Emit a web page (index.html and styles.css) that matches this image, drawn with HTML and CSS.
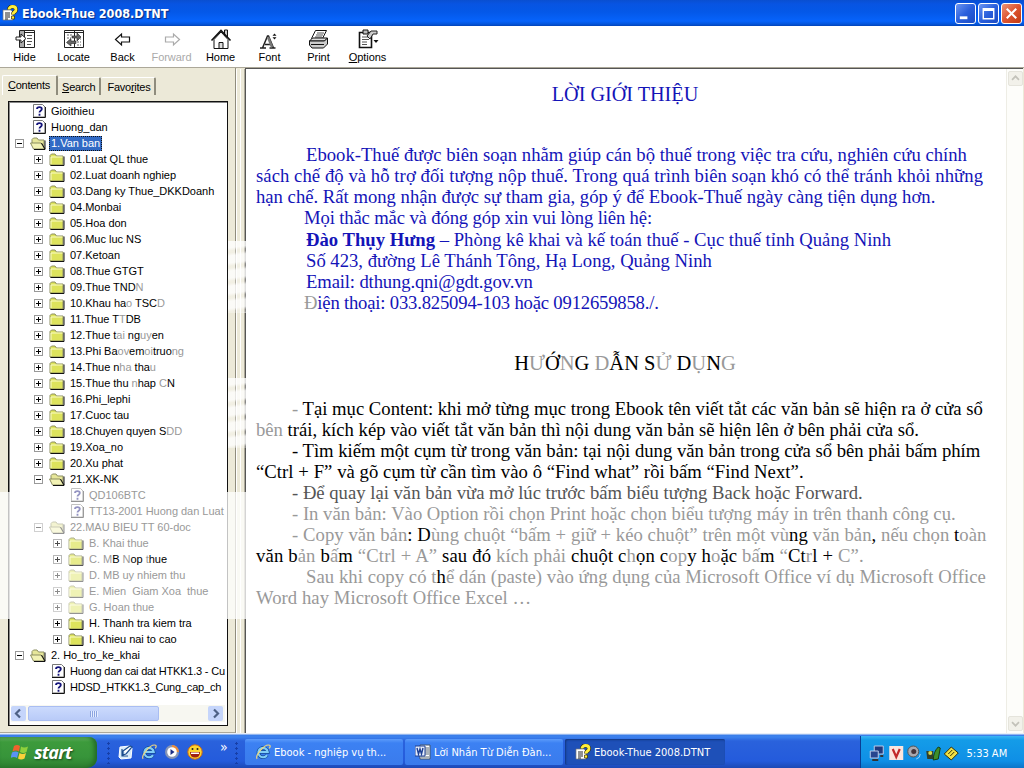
FILE: index.html
```
<!DOCTYPE html>
<html lang="vi">
<head>
    <meta charset="UTF-8">
    <meta name="viewport" content="width=device-width, initial-scale=1.0">
    <title>Ebook-Thue 2008.DTNT</title>
    <link rel="stylesheet" href="styles.css">
</head>
<body>
    <svg class="symbols">
        <symbol id="help" viewBox="0 0 16 16">
            <path d="M1 5h8l2 2v8H1z" fill="#fff" stroke="#777" stroke-width=".7"/>
            <path d="M3 8h5M3 10h5M3 12h5M3 14h3" stroke="#222" stroke-width="1"/>
            <path d="M7 4.500c0-4 7-4 7 0 0 3-3 2-3 5" fill="none" stroke="#332b00" stroke-width="4"/>
            <path d="M7 4.500c0-4 7-4 7 0 0 3-3 2-3 5" fill="none" stroke="#ffef3c" stroke-width="2.800"/>
            <path d="M9.500 11h3v3h-3z" fill="#ffef3c" stroke="#332b00" stroke-width=".7"/>
        </symbol>
        <symbol id="folder" viewBox="0 0 16 13">
            <path d="M1 12V2.500L2.500 1H6l1.500 2H14v9z" fill="#dde35c" stroke="#8d8f62"/>
            <path d="M2 4h11.500M2 4v7" stroke="#fbfcc8" fill="none"/>
            <path d="M15 3.500V12.500H1.500" fill="none" stroke="#111"/>
        </symbol>
        <symbol id="open" viewBox="0 0 16 13">
            <path d="M2 6V2.500L3.500 1H7l1.500 2H14v9z" fill="#e6e69a" stroke="#8d8f62"/>
            <path d="M.500 6h10.500l3.500 6H3.500z" fill="#f2f2b4" stroke="#8d8f62"/>
            <path d="M15 3.500V12.500H4M11.500 6l3.500 6" fill="none" stroke="#111"/>
        </symbol>
        <symbol id="leaf" viewBox="0 0 13 14">
            <path d="M.500.500H9.500L12 3V13H.500z" fill="#fff" stroke="#777"/>
            <path d="M12.400 3V13.500H0" fill="none" stroke="#111"/>
            <path d="M4 5c0-2.600 4.800-2.600 4.800 0 0 1.800-2.300 1.500-2.300 3.500M6.500 9.800v1.900" fill="none" stroke="#14147a" stroke-width="1.800"/>
        </symbol>
        <symbol id="ie" viewBox="0 0 18 18">
            <path d="M13.500 12.500a5.300 5.300 0 1 1 .8-3.500H5" fill="none" stroke="#134a96" stroke-width="4"/>
            <path d="M13.500 12.500a5.300 5.300 0 1 1 .8-3.500H5" fill="none" stroke="#7fcdf8" stroke-width="2.400"/>
            <path d="M2.500 16.500C-1 14 11-1 16.500 1.500c1 .5.500 2-.5 3.500" fill="none" stroke="#f3d87c" stroke-width="1.300"/>
        </symbol>
    </svg>

    <div class="titlebar">
        <svg class="app-icon"><use href="#help"/></svg>
        <h1>Ebook-Thue 2008.DTNT</h1>
        <div class="win-buttons">
            <span class="win-btn"><svg viewBox="0 0 20 20"><path d="M4 14.500h8" stroke="#fff" stroke-width="3"/></svg></span>
            <span class="win-btn"><svg viewBox="0 0 20 20"><path d="M4.500 5h11v10.500h-11zM4.500 6.500h11" fill="none" stroke="#fff" stroke-width="1.500"/></svg></span>
            <span class="win-btn close"><svg viewBox="0 0 20 20"><path d="M5 5l10 10M15 5L5 15" stroke="#fff" stroke-width="2.200"/></svg></span>
        </div>
    </div>

    <div class="toolbar">
        <div class="tool">
            <svg viewBox="0 0 20 20"><path d="M4.500 1.500h15v17h-15zM9.500 2v16M4 3.500h15" fill="#fff" stroke="#222"/><path d="M5 2h4v16H5z" fill="#aaa"/><path d="M12 6.500h5M12 9.500h5M12 12.500h5M12 15.500h4" stroke="#555"/><path d="M1 8h5V5l5 4.500L6 14v-3H1z" fill="#fff" stroke="#222"/></svg>
            <span>Hide</span>
        </div>
        <div class="tool">
            <svg viewBox="0 0 20 20"><path d="M.500 1.500h19v17H.500zM10.500 2v16M0 3.500h19" fill="#fff" stroke="#222"/><path d="M3 6h5M3 9h4M13 10h4M13 13h4M13 16h4" stroke="#666" stroke-dasharray="2 1"/><path d="M8 7h5V4l4 4-4 4V9H8zM12 12H7V9.500L2.500 13.500 7 17v-2.500h5z" fill="#666" stroke="#222" stroke-width=".6"/></svg>
            <span>Locate</span>
        </div>
        <div class="tool">
            <svg viewBox="0 0 20 20"><path d="M2.500 10.500l6-5.500v3h8v5h-8v3z" fill="#fff" stroke="#111" stroke-width="1.200"/></svg>
            <span>Back</span>
        </div>
        <div class="tool disabled">
            <svg viewBox="0 0 20 20"><path d="M17.500 10.500l-6-5.500v3h-8v5h8v3z" fill="#fff" stroke="#aaa" stroke-width="1.200"/></svg>
            <span>Forward</span>
        </div>
        <div class="tool">
            <svg viewBox="0 0 20 20"><path d="M13.500 1h3v7h-3z" fill="#ccc" stroke="#111"/><path d="M3 10.500v9h14v-9L10 3z" fill="#fff" stroke="#111"/><path d="M.500 11.500L10 1.500l9.500 10" fill="none" stroke="#111" stroke-width="1.600"/><path d="M8 13.500h4v6H8z" fill="#ddd" stroke="#111"/></svg>
            <span>Home</span>
        </div>
        <div class="tool">
            <svg viewBox="0 0 20 20"><path d="M2.500 19l5-12h1l5 12M5 15.500h7M0 19h6M9.500 19h6" fill="none" stroke="#222" stroke-width="1.500"/><path d="M8 8l4 10" stroke="#777" stroke-width="2.500"/><path d="M14.500 4.500l2 2.200h-4zM14.500 10.500l2-2.200h-4z" fill="#111"/></svg>
            <span>Font</span>
        </div>
        <div class="tool">
            <svg viewBox="0 0 20 20"><path d="M6.500 1.500h11l-4 8h-11z" fill="#fff" stroke="#111"/><path d="M8 4h7M7 6h7M6 8h7" stroke="#555"/><path d="M.500 12l3-3h15l-3 3z" fill="#ddd" stroke="#111"/><path d="M.500 12h15l3-3v6l-4 4H3l-2.500-3z" fill="#ccc" stroke="#111"/><path d="M2 15.500h13" stroke="#111"/></svg>
            <span>Print</span>
        </div>
        <div class="tool">
            <svg viewBox="0 0 20 20"><path d="M1.500 3.500h12v15h-12z" fill="#fff" stroke="#111" stroke-width="1.600"/><path d="M4 8h7M4 10.500h7M4 13h5M4 15.500h5" stroke="#555"/><path d="M5 1h5v4H5z" fill="#bbb" stroke="#111"/><path d="M9 7l4-5h6v3h-4l-3 5z" fill="#ccc" stroke="#222"/><path d="M15.500 11h5L18 14z" fill="#111"/></svg>
            <span><u>O</u>ptions</span>
        </div>
    </div>

    <div class="main">
        <div class="sidebar">
            <div class="tabs">
                <span class="tab active"><u>C</u>ontents</span>
                <span class="tab"><u>S</u>earch</span>
                <span class="tab">Favo<u>r</u>ites</span>
            </div>
            <div class="tree">
                <div id="tree-list"></div>
                <div class="hscroll">
                    <span class="arrow"><svg viewBox="0 0 15 15"><path d="M9 3.500L5 7.500l4 4" /></svg></span>
                    <span class="thumb"><i></i></span>
                    <span class="arrow"><svg viewBox="0 0 15 15"><path d="M6 3.500l4 4-4 4" /></svg></span>
                </div>
            </div>
        </div>
        <div class="splitter"></div>
        <div class="document">
            <div class="page">
                <h2 class="intro">LỜI GIỚI THIỆU</h2>
                <div class="text intro">
                    <p class="in">Ebook-Thuế được biên soạn nhằm giúp cán bộ thuế trong việc tra cứu, nghiên cứu chính</p>
                    <p class="wide">sách chế độ và hỗ trợ đối tượng nộp thuế. Trong quá trình biên soạn khó có thể tránh khỏi những</p>
                    <p>hạn chế. Rất mong nhận được sự tham gia, góp ý để Ebook-Thuế ngày càng tiện dụng hơn.</p>
                    <p class="in2 tight">Mọi thắc mắc và đóng góp xin vui lòng liên hệ:</p>
                    <p class="in contact"><b>Đào Thụy Hưng</b> – Phòng kê khai và kế toán thuế - Cục thuế tỉnh Quảng Ninh</p>
                    <p class="in">Số 423, đường Lê Thánh Tông, Hạ Long, Quảng Ninh</p>
                    <p class="in tight">Email: dthung.qni@gdt.gov.vn</p>
                    <p class="in2 tighter"><s>Đ</s>iện thoại: 033.825094-103 hoặc 0912659858./.</p>
                </div>
                <h2 class="guide">H<s>Ư</s>Ớ<s>N</s>G <s>D</s>ẪN S<s>Ử</s> D<s>Ụ</s>N<s>G</s></h2>
                <div class="text">
                    <p class="dash"><s>-</s> Tại mục Content: khi mở từng mục trong Ebook tên viết tắt các văn bản sẽ hiện ra ở cửa sổ</p>
                    <p><s>bên</s> trái, kích kép vào viết tắt văn bản thì nội dung văn bản sẽ hiện lên ở bên phải cửa sổ.</p>
                    <p class="dash">- Tìm kiếm một cụm từ trong văn bản: tại nội dung văn bản trong cửa sổ bên phải bấm phím</p>
                    <p class="wide">“Ctrl + F” và gõ cụm từ cần tìm vào ô “Find what” rồi bấm “Find Next”.</p>
                    <p class="dash half">- Để quay lại văn bản vừa mở lúc trước bấm biểu tượng Back hoặc Forward.</p>
                    <p class="dash"><s>- In văn bản: Vào Option rồi chọn Print hoặc chọn biểu tượng máy in trên thanh công cụ.</s></p>
                    <p class="dash wide"><s>- Copy văn bản</s>: D<s>ùng chuột “bấm + giữ + kéo chuột” trên một vù</s>ng <s>văn bản</s>, <s>nếu chọn</s> t<s>oàn</s></p>
                    <p class="wider">văn b<s>ản</s> b<s>ấ</s>m <s>“Ctrl + A”</s> sau đó <s>kích phải</s> chuột c<s>h</s>ọn c<s>op</s>y h<s>o</s>ặc <s>bấ</s>m <s>“</s>Ct<s>r</s>l + <s>C”.</s></p>
                    <p class="in wide"><s>Sau khi copy có t</s>h<s>ể dán (paste) vào ứng dụng của Microsoft Office ví dụ Microsoft Office</s></p>
                    <p class="wide"><s>Word hay Microsoft Office Excel …</s></p>
                </div>
            </div>
            <div class="vscroll">
                <span><svg viewBox="0 0 15 15"><path d="M3.500 9l4-4 4 4"/></svg></span>
                <span><svg viewBox="0 0 15 15"><path d="M3.500 6l4 4 4-4"/></svg></span>
            </div>
        </div>
        <div class="haze left"></div>
        <div class="haze right"></div>
        <div class="haze wave one"></div>
        <div class="haze wave two"></div>
    </div>

    <div class="taskbar">
        <div class="start">
            <svg viewBox="0 0 18 18"><path d="M3 3q3-2 6 0L8 8.500q-3-2-6.500 0z" fill="#f0622d"/><path d="M10 3.500q3 2 7 0L15.500 9q-3 2-6.500 0z" fill="#8ed03c"/><path d="M1 9.500q3.500-2 6.500 0L6 15q-3-2-6.500 0z" fill="#5a92f5"/><path d="M8.500 10q3 2 6.500 0l-1.500 5.500q-3.500 2-6.500 0z" fill="#fbd13a"/></svg>
            <em>start</em>
        </div>
        <div class="grip"></div>
        <div class="quick">
            <svg viewBox="0 0 16 16"><path d="M2 3l10-1 2 2-1 10-10 1-2-2z" fill="#d7ebfa" stroke="#fff"/><path d="M5 7l7-5 2 1-6 7-3 1zM4 5v7h6" fill="#fff" stroke="#1b4d8e" stroke-width="1.200"/></svg>
            <svg><use href="#ie"/></svg>
            <svg viewBox="0 0 16 16"><circle cx="8" cy="8" r="7" fill="#8795b5"/><path d="M8 1a7 7 0 0 1 7 7H8z" fill="#e98b3c"/><circle cx="8" cy="8" r="4.800" fill="#fff"/><path d="M6.500 5l4 3-4 3z" fill="#1c2e86"/></svg>
            <svg viewBox="0 0 16 16"><circle cx="8" cy="8" r="7.200" fill="#ffd52e" stroke="#d06a12"/><path d="M3 8h10q0 5.500-5 5.500T3 8z" fill="#a01e10"/><path d="M4 8.500h8v1.500H4z" fill="#fff"/><circle cx="5.500" cy="5" r="1" fill="#222"/><circle cx="10.500" cy="5" r="1" fill="#222"/></svg>
            <span class="more">»</span>
        </div>
        <div class="grip second"></div>
        <div class="tasks">
            <div class="task"><svg><use href="#ie"/></svg><span>Ebook - nghiệp vụ th...</span></div>
            <div class="task"><svg viewBox="0 0 16 16"><path d="M5 1h10v14H5z" fill="#fff" stroke="#456"/><path d="M10 4h4M10 6h4M10 8h4M10 10h4M6 13h8" stroke="#567"/><path d="M0 2h10v10H0z" fill="#e6eefc" stroke="#1c3f94"/><path d="M2 4l1.500 6L5 5l1.500 5L8 4" fill="none" stroke="#1c3f94" stroke-width="1.400"/></svg><span>Lời Nhắn Từ Diễn Đàn...</span></div>
            <div class="task current"><svg><use href="#help"/></svg><span>Ebook-Thue 2008.DTNT</span></div>
        </div>
        <div class="tray">
            <svg viewBox="0 0 16 16"><path d="M5 1h9v8H5z" fill="#213a7c" stroke="#b9c8e8"/><path d="M1 6h8v7H1z" fill="#27458f" stroke="#b9c8e8"/><path d="M3 15h6M11 11h3" stroke="#333" stroke-width="2"/></svg>
            <svg viewBox="0 0 16 16"><path d="M1 1h14v14H1z" fill="#fbe6de"/><path d="M4.500 4L8 12l3.500-8" fill="none" stroke="#c22a2a" stroke-width="2.200"/></svg>
            <svg viewBox="0 0 16 16"><circle cx="7" cy="6.500" r="5.500" fill="#a9a9b0" stroke="#555"/><circle cx="7.500" cy="6.500" r="2.500" fill="#43343a"/><path d="M10 14q4-1 4-5" fill="none" stroke="#9bd4ff"/></svg>
            <svg viewBox="0 0 16 16"><path d="M1 6h7v8H2z" fill="#33402a"/><path d="M8 15q0-8 5-13l2 1-2 11z" fill="#3e8f29" stroke="#183d10"/><circle cx="5" cy="8" r="2" fill="#d5d84a"/></svg>
            <svg viewBox="0 0 16 16"><path d="M1 9l7-7 7 6-7 7z" fill="#f0df45" stroke="#332e08"/><path d="M5 9l4-4M7 11l4-4" stroke="#332e08"/></svg>
            <span>5:33 AM</span>
        </div>
    </div>

    <script>
        // level, icon, label, toggle sign, row class
        let items = [
            [0, "leaf", "Gioithieu"],
            [0, "leaf", "Huong_dan"],
            [0, "open", "1.Van ban", "-", "selected"],
            [1, "folder", "01.Luat QL thue", "+"],
            [1, "folder", "02.Luat doanh nghiep", "+"],
            [1, "folder", "03.Dang ky Thue_DKKDoanh", "+"],
            [1, "folder", "04.Monbai", "+"],
            [1, "folder", "05.Hoa don", "+"],
            [1, "folder", "06.Muc luc NS", "+"],
            [1, "folder", "07.Ketoan", "+"],
            [1, "folder", "08.Thue GTGT", "+"],
            [1, "folder", "09.Thue TND<s>N</s>", "+"],
            [1, "folder", "10.Khau ha<s>o</s> TSC<s>D</s>", "+"],
            [1, "folder", "11.Thue T<s>T</s>DB", "+"],
            [1, "folder", "12.Thue t<s>ai</s> ng<s>uy</s>en", "+"],
            [1, "folder", "13.Phi Ba<s>ov</s>em<s>oi</s>truo<s>ng</s>", "+"],
            [1, "folder", "14.Thue n<s>ha</s> tha<s>u</s>", "+"],
            [1, "folder", "15.Thue thu <s>n</s>hap <s>C</s>N", "+"],
            [1, "folder", "16.Phi_lephi", "+"],
            [1, "folder", "17.Cuoc tau", "+"],
            [1, "folder", "18.Chuyen quyen S<s>DD</s>", "+"],
            [1, "folder", "19.Xoa_no", "+"],
            [1, "folder", "20.Xu phat", "+"],
            [1, "open", "21.XK-NK", "-"],
            [2, "leaf", "QD106BTC", "", "faded"],
            [2, "leaf", "TT13-2001 Huong dan Luat", "", "faded"],
            [1, "open", "22.MAU BIEU TT 60-doc", "-", "faded"],
            [2, "folder", "<s>B. Khai thue</s>", "+", "half-faded"],
            [2, "folder", "<s>C. M</s>B <s>N</s>op <s>t</s>hue", "+", "half-faded"],
            [2, "folder", "D. MB uy nhiem thu", "+", "faded"],
            [2, "folder", "E. Mien&nbsp; Giam Xoa&nbsp; thue", "+", "faded"],
            [2, "folder", "G. Hoan thue", "+", "faded"],
            [2, "folder", "H. Thanh tra kiem tra", "+"],
            [2, "folder", "I. Khieu nai to cao", "+"],
            [0, "open", "2. Ho_tro_ke_khai", "-"],
            [1, "leaf", "Huong dan cai dat HTKK1.3 - Cu", "", "long"],
            [1, "leaf", "HDSD_HTKK1.3_Cung_cap_ch", "", "long"]
        ];

        let list = document.getElementById("tree-list");
        items.forEach(([level, icon, label, sign, cls]) => {
            list.innerHTML += `<div class="row level${level} ${cls || ""}">
                <span class="toggle ${sign == "+" ? "plus" : sign == "-" ? "minus" : ""}"></span>
                <svg class="${icon}"><use href="#${icon}"/></svg>
                <span class="label">${label}</span>
            </div>`;
        });
    </script>
</body>
</html>
```
FILE: styles.css
```
* { box-sizing: border-box; }
body { margin: 0; width: 1024px; height: 768px; overflow: hidden; display: flex; flex-direction: column; background: #fff; font-family: "Liberation Sans", Arial, sans-serif; font-size: 11px; color: #000; }
s { text-decoration: none; color: #999; }
.symbols { display: none; }

.titlebar { height: 26px; flex: none; display: flex; align-items: center; padding: 0 2px 0 2px; background: linear-gradient(#0a4fd0 0, #0854e2 4px, #0458e8 12px, #0663fb 21px, #0456dc 24px, #0344b8 26px); color: #fff; }
.app-icon { width: 16px; height: 16px; margin-right: 4px; }
.titlebar h1 { margin: 0; flex: 1; font: bold 12.5px "DejaVu Sans Condensed", "Open Sans", sans-serif; text-shadow: 1px 1px 1px #0a2a80; letter-spacing: 0; }
.win-buttons { display: flex; gap: 2px; }
.win-btn { width: 21px; height: 21px; border: 1px solid #fff; border-radius: 3px; background: linear-gradient(135deg, #6c95f2, #2a5fdc 50%, #1c4cc4); }
.win-btn svg { display: block; width: 19px; height: 19px; }
.win-btn.close { background: linear-gradient(135deg, #ee9478, #dd5430 50%, #c23a12); }

.toolbar { height: 41px; flex: none; display: flex; background: #fff; }
.tool { width: 49px; display: flex; flex-direction: column; align-items: center; padding-top: 3px; }
.tool svg { width: 20px; height: 20px; flex: none; overflow: visible; }
.tool span { font-size: 11px; line-height: 14px; margin-top: 1px; letter-spacing: -.05px; }
.disabled { color: #aaa; }

.main { position: relative; height: 666px; flex: none; display: flex; background: #ece9d8; border-top: 1px solid #aca899; }
.sidebar { width: 236px; padding: 7px 7px 7px 2px; border-right: 1px solid #8f8c7d; border-bottom: 1px solid #aca899; display: flex; flex-direction: column; }
.tabs { height: 20px; display: flex; align-items: flex-end; }
.tab { height: 18px; padding: 2px 4px 0; font-size: 11px; line-height: 15px; letter-spacing: -.25px; border-top: 1px solid #fff; border-right: 2px solid #8f8c7d; border-radius: 2px 2px 0 0; }
.tab + .tab + .tab { padding-left: 6px; }
.tab.active { height: 20px; padding: 2px 6px 0 5px; border-left: 1px solid #fff; }
.tree { flex: none; width: 220px; height: 625px; margin: 6px 0 0 6px; padding: 1px 1px 0; background: #fff; border: 1px solid #111; box-shadow: inset 1px 1px #888; display: flex; flex-direction: column; overflow: hidden; }
#tree-list { flex: 1; overflow: hidden; }
.row { display: flex; align-items: center; height: 16px; padding-left: 5px; white-space: nowrap; }
.level1 { padding-left: 24px; }
.level2 { padding-left: 43px; }
.toggle { width: 9px; height: 9px; flex: none; margin-right: 6px; }
.plus, .minus { border: 1px solid #999; background: linear-gradient(#000, #000) center/5px 1px no-repeat #fff; }
.plus { background: linear-gradient(#000, #000) center/5px 1px no-repeat, linear-gradient(#000, #000) center/1px 5px no-repeat #fff; }
.row svg { flex: none; width: 16px; height: 13px; }
.row svg.leaf { width: 13px; height: 14px; margin-left: 3px; }
.label { font-size: 11px; line-height: 15px; padding: 0 2px; margin-left: 3px; letter-spacing: -.02px; }
.long .label { letter-spacing: -.2px; padding-right: 0; }
.selected .label { background: #316ac5; color: #fff; outline: 1px dotted #111; outline-offset: -1px; }
.faded { color: #999; }
.faded .toggle, .faded svg { opacity: .45; }
.half-faded .toggle, .half-faded svg { opacity: .7; }
.hscroll { height: 17px; flex: none; margin: 0 1px 3px; display: flex; background: #f7f7f1; }
.arrow { width: 15px; height: 15px; margin-top: 1px; background: #c5d5fb; border-radius: 2px; }
.arrow svg { display: block; width: 15px; height: 15px; }
.arrow path { fill: none; stroke: #4d6185; stroke-width: 2.2; }
.thumb { width: 131px; height: 15px; margin: 1px 49px 0 2px; display: flex; align-items: center; justify-content: center; background: linear-gradient(#cbdafd, #b9cbf8); border: 1px solid #a9bdf2; border-radius: 2px; }
.thumb i { width: 8px; height: 6px; background: repeating-linear-gradient(90deg, #8ba4e0 0 1px, #e5edff 1px 2px); }

.splitter { width: 9px; margin-top: 1px; border-left: 1px solid #fff; background: linear-gradient(90deg, #ece9d8 0 3px, #fff 3px 4px, #ece9d8 4px 7px, #aca899 7px); }
.document { flex: 1; display: flex; background: #fff; border-top: 1px solid #555; border-left: 1px solid #555; margin-right: 1px; }
.page { width: 760px; padding: 0 0 0 10px; font-family: "Liberation Serif", "Times New Roman", serif; font-size: 18.67px; }
.page h2 { margin: 0; width: 738px; text-align: center; font-size: 20.5px; font-weight: normal; line-height: 24px; }
.page h2.intro { padding-top: 13px; font-size: 20.2px; }
.page h2.guide { margin-top: 38px; }
.intro { color: #1414b8; }
.text { margin-top: 38px; }
.page h2.guide + .text { margin-top: 23px; }
.text p { margin: 0; height: 21px; line-height: 21px; white-space: nowrap; }
.text .contact { margin-top: 1px; }
.text .in { padding-left: 50px; }
.text .in2 { padding-left: 48px; }
.text .dash { padding-left: 36px; }
.wide { letter-spacing: .06px; }
.wider { letter-spacing: .15px; }
.tight { letter-spacing: -.14px; }
.tighter { letter-spacing: -.19px; }
.half { color: #555; }
.vscroll { width: 17px; display: flex; flex-direction: column; justify-content: space-between; padding: 2px 0 2px 1px; background: #fdfdfa; border-left: 1px solid #eeede5; }
.vscroll span { width: 15px; height: 15px; background: #f2f1ea; border: 1px solid #e5e4dc; border-radius: 2px; }
.vscroll svg { display: block; width: 13px; height: 13px; }
.vscroll path { fill: none; stroke: #c3c2ba; stroke-width: 2; }

/* pale band across the window frame */
.haze { position: absolute; top: 424px; height: 127px; background: rgba(255,255,255,.75); }
.haze.left { left: 0; width: 11px; }
.haze.right { left: 226px; width: 20px; }
.haze.wave { left: 228px; width: 18px; background: repeating-linear-gradient(172deg, rgba(255,255,255,.8) 0 7px, rgba(255,255,255,.3) 10px 12px, rgba(255,255,255,.8) 15px); }
.haze.one { top: 173px; height: 72px; }
.haze.two { top: 310px; height: 70px; }

.taskbar { height: 35px; flex: none; display: flex; align-items: stretch; background: linear-gradient(#e8eef8 0 1px, #3a7de8 2px, #3c82ee 4px, #2a62dc 8px, #245bdc 28px, #1d49b4); color: #fff; font-family: "DejaVu Sans Condensed", sans-serif; font-size: 11px; }
.start { width: 97px; margin-top: 4px; display: flex; align-items: center; gap: 5px; padding: 0 0 2px 11px; background: linear-gradient(#69b565, #3d9b3c 5px, #37943a 20px, #2d7f2f); border-radius: 0 8px 10px 0; box-shadow: inset -3px 0 4px #236b27; }
.start svg { width: 18px; height: 18px; }
.start em { font: italic bold 18px "Open Sans", sans-serif; text-shadow: 1px 1px 2px #1a4a1c; letter-spacing: -0.8px; }
.grip { width: 5px; margin: 8px 0 4px 9px; background: radial-gradient(circle, #173fa8 1px, transparent 1.4px) 0 0/5px 5px; }
.quick { display: flex; align-items: center; gap: 7px; padding: 3px 0 0 7px; width: 123px; }
.quick svg { width: 16px; height: 16px; flex: none; }
.more { font-size: 14px; line-height: 14px; margin: -10px 0 0 10px; }
.grip.second { margin-left: 0; }
.tasks { display: flex; gap: 2px; padding: 6px 0 3px; margin-left: 6px; flex: 1; }
.task { width: 158px; display: flex; align-items: center; gap: 3px; padding-left: 10px; border-radius: 2px; background: linear-gradient(#5c9bfa, #3c81f3 4px, #3a7bec); white-space: nowrap; }
.task svg { width: 16px; height: 16px; flex: none; }
.task.current { width: 160px; background: #1e50b8; box-shadow: inset 1px 1px 2px #12357e; }
.tray { width: 164px; display: flex; align-items: center; gap: 2px; padding: 2px 0 0 8px; margin-top: 3px; border-left: 1px solid #0a3d94; background: linear-gradient(#3bb5f5, #149ce8 4px, #0f8fe6 25px, #0d75c8); }
.tray svg { width: 16.500px; height: 16px; flex: none; }
.tray span { margin-left: 5px; white-space: nowrap; }
```
